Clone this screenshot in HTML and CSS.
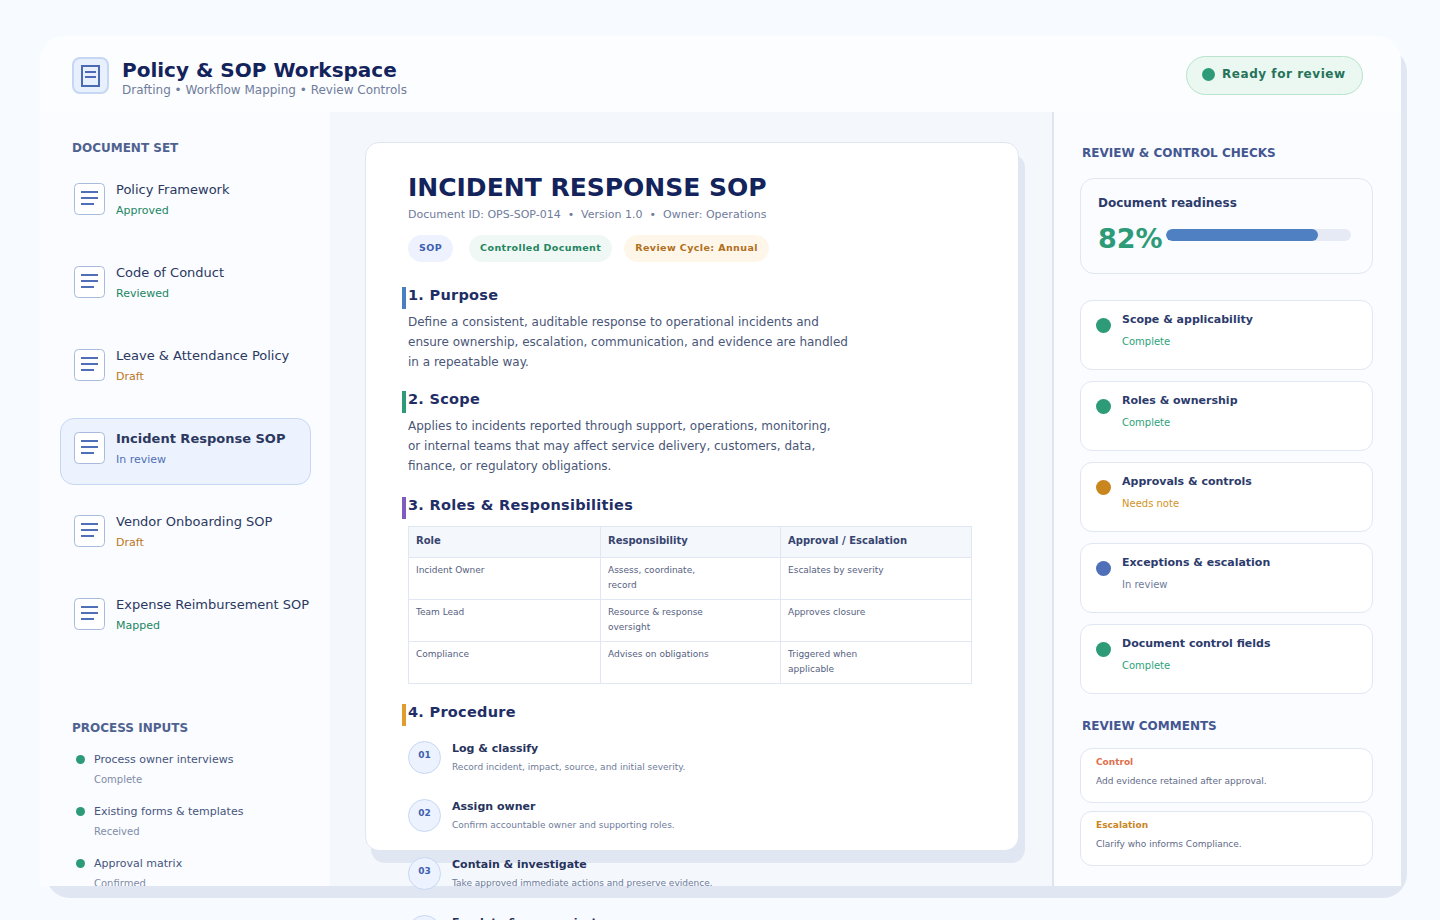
FILE: index.html
```html
<!DOCTYPE html>
<html lang="en">
<head>
<meta charset="utf-8">
<title>Policy &amp; SOP Workspace</title>
<link rel="stylesheet" href="styles.css">
</head>
<body>
<svg class="sprite" width="0" height="0" aria-hidden="true">
  <symbol id="doc" viewBox="0 0 32 32">
    <rect x="0.5" y="0.5" width="30" height="31" rx="4" fill="#fff" stroke="#a9bbdc"/>
    <path d="M7 9h17M7 15h17M7 21h13" stroke="#4f6fb8" stroke-width="2" fill="none"/>
  </symbol>
</svg>
<div class="shell">
  <header class="topbar">
    <div class="brand">
      <div class="brand-icon">
        <svg width="20" height="23" viewBox="0 0 20 23"><rect x="1" y="1" width="17" height="20" fill="none" stroke="#4a6ab4" stroke-width="2"/><path d="M4 7h11M4 12h11" stroke="#4a6ab4" stroke-width="2"/></svg>
      </div>
      <div>
        <h1 class="brand-title">Policy &amp; SOP Workspace</h1>
        <p class="brand-sub">Drafting • Workflow Mapping • Review Controls</p>
      </div>
    </div>
    <div class="ready"><span class="ready-dot"></span>Ready for review</div>
  </header>
  <div class="columns">
    <aside class="sidebar">
      <h2 class="side-head">DOCUMENT SET</h2>
      <ul class="doc-list">
        <li class="doc"><svg class="doc-icon"><use href="#doc"/></svg><div><div class="doc-name">Policy Framework</div><div class="doc-state green">Approved</div></div></li>
        <li class="doc"><svg class="doc-icon"><use href="#doc"/></svg><div><div class="doc-name">Code of Conduct</div><div class="doc-state green">Reviewed</div></div></li>
        <li class="doc"><svg class="doc-icon"><use href="#doc"/></svg><div><div class="doc-name">Leave &amp; Attendance Policy</div><div class="doc-state amber">Draft</div></div></li>
        <li class="doc active"><svg class="doc-icon"><use href="#doc"/></svg><div><div class="doc-name">Incident Response SOP</div><div class="doc-state blue">In review</div></div></li>
        <li class="doc"><svg class="doc-icon"><use href="#doc"/></svg><div><div class="doc-name">Vendor Onboarding SOP</div><div class="doc-state amber">Draft</div></div></li>
        <li class="doc"><svg class="doc-icon"><use href="#doc"/></svg><div><div class="doc-name">Expense Reimbursement SOP</div><div class="doc-state green">Mapped</div></div></li>
      </ul>
      <h2 class="side-head inputs-head">PROCESS INPUTS</h2>
      <ul class="inputs">
        <li class="input"><span class="input-dot"></span><div><div class="input-name">Process owner interviews</div><div class="input-state">Complete</div></div></li>
        <li class="input"><span class="input-dot"></span><div><div class="input-name">Existing forms &amp; templates</div><div class="input-state">Received</div></div></li>
        <li class="input"><span class="input-dot"></span><div><div class="input-name">Approval matrix</div><div class="input-state">Confirmed</div></div></li>
      </ul>
    </aside>
    <main class="main">
      <article class="paper">
        <h2 class="paper-title">INCIDENT RESPONSE SOP</h2>
        <p class="paper-meta">Document ID: OPS-SOP-014 &nbsp;•&nbsp; Version 1.0 &nbsp;•&nbsp; Owner: Operations</p>
        <div class="tags">
          <span class="tag tag-blue">SOP</span>
          <span class="tag tag-green">Controlled Document</span>
          <span class="tag tag-amber">Review Cycle: Annual</span>
        </div>
        <h3 class="sec sec-blue">1. Purpose</h3>
        <p class="body-text">Define a consistent, auditable response to operational incidents and<br>ensure ownership, escalation, communication, and evidence are handled<br>in a repeatable way.</p>
        <h3 class="sec sec-green">2. Scope</h3>
        <p class="body-text">Applies to incidents reported through support, operations, monitoring,<br>or internal teams that may affect service delivery, customers, data,<br>finance, or regulatory obligations.</p>
        <h3 class="sec sec-purple sec-roles">3. Roles &amp; Responsibilities</h3>
        <table class="roles">
          <colgroup><col class="c1"><col class="c2"><col class="c3"></colgroup>
          <thead><tr><th>Role</th><th>Responsibility</th><th>Approval / Escalation</th></tr></thead>
          <tbody>
            <tr><td>Incident Owner</td><td>Assess, coordinate,<br>record</td><td>Escalates by severity</td></tr>
            <tr><td>Team Lead</td><td>Resource &amp; response<br>oversight</td><td>Approves closure</td></tr>
            <tr><td>Compliance</td><td>Advises on obligations</td><td>Triggered when<br>applicable</td></tr>
          </tbody>
        </table>
        <h3 class="sec sec-orange sec-proc">4. Procedure</h3>
        <ol class="steps">
          <li class="step"><span class="step-num">01</span><div><div class="step-title">Log &amp; classify</div><div class="step-desc">Record incident, impact, source, and initial severity.</div></div></li>
          <li class="step"><span class="step-num">02</span><div><div class="step-title">Assign owner</div><div class="step-desc">Confirm accountable owner and supporting roles.</div></div></li>
          <li class="step"><span class="step-num">03</span><div><div class="step-title">Contain &amp; investigate</div><div class="step-desc">Take approved immediate actions and preserve evidence.</div></div></li>
          <li class="step"><span class="step-num">04</span><div><div class="step-title">Escalate &amp; communicate</div><div class="step-desc">Notify stakeholders using the escalation path.</div></div></li>
        </ol>
      </article>
    </main>
    <aside class="review">
      <h2 class="rev-head">REVIEW &amp; CONTROL CHECKS</h2>
      <section class="readiness">
        <div class="ready-label">Document readiness</div>
        <div class="ready-row">
          <span class="ready-pct">82%</span>
          <div class="bar"><div class="bar-fill" style="width:82%"></div></div>
        </div>
      </section>
      <ul class="checks">
        <li class="check"><span class="check-dot dot-green"></span><div><div class="check-title">Scope &amp; applicability</div><div class="check-state st-green">Complete</div></div></li>
        <li class="check"><span class="check-dot dot-green"></span><div><div class="check-title">Roles &amp; ownership</div><div class="check-state st-green">Complete</div></div></li>
        <li class="check"><span class="check-dot dot-amber"></span><div><div class="check-title">Approvals &amp; controls</div><div class="check-state st-amber">Needs note</div></div></li>
        <li class="check"><span class="check-dot dot-blue"></span><div><div class="check-title">Exceptions &amp; escalation</div><div class="check-state st-blue">In review</div></div></li>
        <li class="check"><span class="check-dot dot-green"></span><div><div class="check-title">Document control fields</div><div class="check-state st-green">Complete</div></div></li>
      </ul>
      <h2 class="rev-head comments-head">REVIEW COMMENTS</h2>
      <div class="comment"><div class="comment-kind kind-red">Control</div><div class="comment-text">Add evidence retained after approval.</div></div>
      <div class="comment"><div class="comment-kind kind-amber">Escalation</div><div class="comment-text">Clarify who informs Compliance.</div></div>
    </aside>
  </div>
</div>
</body>
</html>
```
FILE: styles.css
```css
* { box-sizing: border-box; }
html, body { margin: 0; height: 920px; overflow: hidden; }
body { background: #f7faff; font-family: "DejaVu Sans", sans-serif; color: #26335c; padding: 36px 0 0 40px; }
h1, h2, h3, p, ul, ol { margin: 0; padding: 0; list-style: none; }
.sprite { position: absolute; }

.shell { width: 1361px; height: 850px; background: #fcfdff; border-radius: 24px; box-shadow: 6px 12px 0 #e0e6f2; display: flex; flex-direction: column; }
.topbar { height: 76px; flex: none; padding: 20px 38px 0 32px; display: flex; justify-content: space-between; align-items: flex-start; }
.brand { display: flex; gap: 13px; }
.brand-icon { width: 37px; height: 37px; margin-top: 1px; background: #e8f0fd; border: 2px solid #c6d7f3; border-radius: 8px; display: flex; align-items: center; justify-content: center; }
.brand-icon svg { margin: 1px 0 0 1px; }
.brand-title { font-size: 20px; line-height: 26px; font-weight: 700; color: #13235b; margin-top: 1px; }
.brand-sub { font-size: 12px; line-height: 16px; color: #6f7c9b; margin-top: -1px; }
.ready { width: 177px; height: 39px; border: 1px solid #b8e3cd; background: #ebf8f1; border-radius: 20px; display: flex; align-items: center; padding-left: 15px; gap: 7px; font-size: 12px; letter-spacing: .55px; font-weight: 700; color: #26735a; padding-bottom: 4px; }
.ready-dot { width: 13px; height: 13px; border-radius: 50%; background: #2e9b78; margin-top: 2px; flex: none; }

.columns { flex: 1; display: flex; min-height: 0; }
.sidebar { width: 290px; flex: none; overflow: hidden; padding: 28px 19px 0 20px; background: #fafcff; }
.side-head { font-size: 12px; line-height: 16px; font-weight: 700; color: #4f628f; margin-left: 12px; }
.doc-list { margin-top: 13px; display: flex; flex-direction: column; gap: 16px; }
.doc { height: 67px; display: flex; gap: 10px; padding: 13px 0 0 13px; border: 1px solid transparent; border-radius: 14px; white-space: nowrap; }
.doc.active { background: #edf3fe; border-color: #c6d7f3; }
.doc-icon { width: 32px; height: 32px; flex: none; }
.doc-name { font-size: 13px; line-height: 14px; color: #2b3860; }
.active .doc-name { font-weight: 700; }
.doc-state { font-size: 11px; line-height: 14px; margin-top: 7px; }
.green { color: #22865f; }
.amber { color: #bc7519; }
.blue { color: #4f6fb8; }
.inputs-head { margin-top: 69px; }
.inputs { margin-top: 17px; display: flex; flex-direction: column; gap: 18px; }
.input { display: flex; gap: 9px; padding-left: 16px; }
.input-dot { width: 9px; height: 9px; border-radius: 50%; background: #2e9b78; margin-top: 2px; flex: none; }
.input-name { font-size: 11px; line-height: 14px; color: #47557c; }
.input-state { font-size: 10px; line-height: 14px; color: #818ca8; margin-top: 6px; }

.main { width: 724px; flex: none; background: #f4f7fc; border-right: 2px solid #dfe5f0; padding: 30px 0 0 35px; }
.paper { width: 654px; height: 709px; background: #fff; border: 1px solid #e0e6f2; border-radius: 14px; box-shadow: 6px 12px 0 #e0e6f2; padding: 31px 0 0 42px; }
.paper-title { font-size: 25px; line-height: 28px; font-weight: 700; color: #13235b; }
.paper-meta { font-size: 11px; line-height: 14px; color: #6f7c9b; margin-top: 6px; }
.tags { display: flex; margin-top: 13px; gap: 12px; }
.tag { height: 27px; line-height: 25px; border-radius: 14px; font-size: 9.5px; letter-spacing: .4px; font-weight: 700; padding: 0 11px; }
.tag-blue { background: #edf2fe; color: #3f5fb0; margin-right: 4px; }
.tag-green { background: #eff8f4; color: #24855f; }
.tag-amber { background: #fff6ea; color: #b06f1c; }
.sec { font-size: 14.5px; letter-spacing: .28px; line-height: 16px; height: 22px; font-weight: 700; color: #1f2e66; margin: 25px 0 0 -6px; padding-left: 2px; border-left: 4px solid #4a7fc4; }
.sec-green { border-left-color: #2e9b78; margin-top: 19px; }
.sec-purple { border-left-color: #7f5cc0; }
.sec-orange { border-left-color: #e29c2c; }
.sec-roles { margin-top: 21px; }
.sec-proc { margin-top: 20px; }
.body-text { font-size: 12px; line-height: 20px; color: #4a5678; margin-top: 3px; }
.roles { width: 563px; margin-top: 7px; border-collapse: collapse; table-layout: fixed; font-size: 9px; color: #56617f; }
.c1 { width: 192px; }
.c2 { width: 180px; }
.c3 { width: 191px; }
.roles th, .roles td { border: 1px solid #e0e6f2; text-align: left; vertical-align: top; padding: 0 7px; }
.roles th { height: 31px; background: #f4f7fc; font-weight: 700; font-size: 10px; color: #37446f; line-height: 27px; }
.roles td { height: 42px; line-height: 15px; padding-top: 5px; }
.steps { margin-top: 15px; display: flex; flex-direction: column; gap: 25px; }
.step { display: flex; gap: 11px; height: 33px; }
.step-num { width: 33px; height: 33px; flex: none; border: 1px solid #c6d7f3; background: #edf3fe; border-radius: 50%; font-size: 9px; font-weight: 700; color: #3f5fb0; text-align: center; line-height: 26px; }
.step-title { font-size: 11px; line-height: 14px; font-weight: 700; color: #26335c; margin-top: 1px; }
.step-desc { font-size: 9px; line-height: 12px; color: #6f7c9b; margin-top: 5px; }

.review { flex: 1; padding: 33px 28px 0 26px; background: #fafcff; }
.rev-head { font-size: 12px; line-height: 16px; font-weight: 700; color: #445791; margin-left: 2px; }
.readiness { margin-top: 17px; height: 96px; border: 1px solid #e0e6f2; border-radius: 14px; padding: 15px 17px 0; }
.ready-label { font-size: 12px; line-height: 16px; font-weight: 700; color: #2d3b6c; margin-top: 1px; }
.ready-row { display: flex; margin-top: 11px; }
.ready-pct { font-size: 27px; line-height: 34px; color: #2e9b78; font-weight: 700; width: 68px; flex: none; }
.bar { width: 185px; height: 12px; margin-top: 7px; background: #e6eaf4; border-radius: 6px; overflow: hidden; }
.bar-fill { height: 100%; background: #4f80c2; border-radius: 6px; }
.checks { margin-top: 26px; display: flex; flex-direction: column; gap: 11px; }
.check { height: 70px; background: #fff; border: 1px solid #e0e6f2; border-radius: 12px; display: flex; gap: 11px; padding: 11px 0 0 15px; }
.check-dot { width: 15px; height: 15px; border-radius: 50%; flex: none; margin-top: 6px; }
.dot-green { background: #2e9b78; }
.dot-amber { background: #c9861f; }
.dot-blue { background: #4f6fb8; }
.check-title { font-size: 11px; line-height: 14px; font-weight: 700; color: #2d3b6c; margin-top: 1px; }
.check-state { font-size: 10px; line-height: 14px; margin-top: 8px; }
.st-green { color: #2ca27a; }
.st-amber { color: #d19327; }
.st-blue { color: #6f7c9b; }
.comments-head { margin-top: 24px; }
.comment { height: 55px; background: #fff; border: 1px solid #e0e6f2; border-radius: 12px; margin-top: 8px; padding: 7px 15px 0; }
.comments-head + .comment { margin-top: 14px; }
.comment-kind { font-size: 9px; line-height: 13px; font-weight: 700; }
.kind-red { color: #de6f4d; }
.kind-amber { color: #c9861f; }
.comment-text { font-size: 9px; line-height: 13px; color: #5f6a88; margin-top: 6px; }
```
